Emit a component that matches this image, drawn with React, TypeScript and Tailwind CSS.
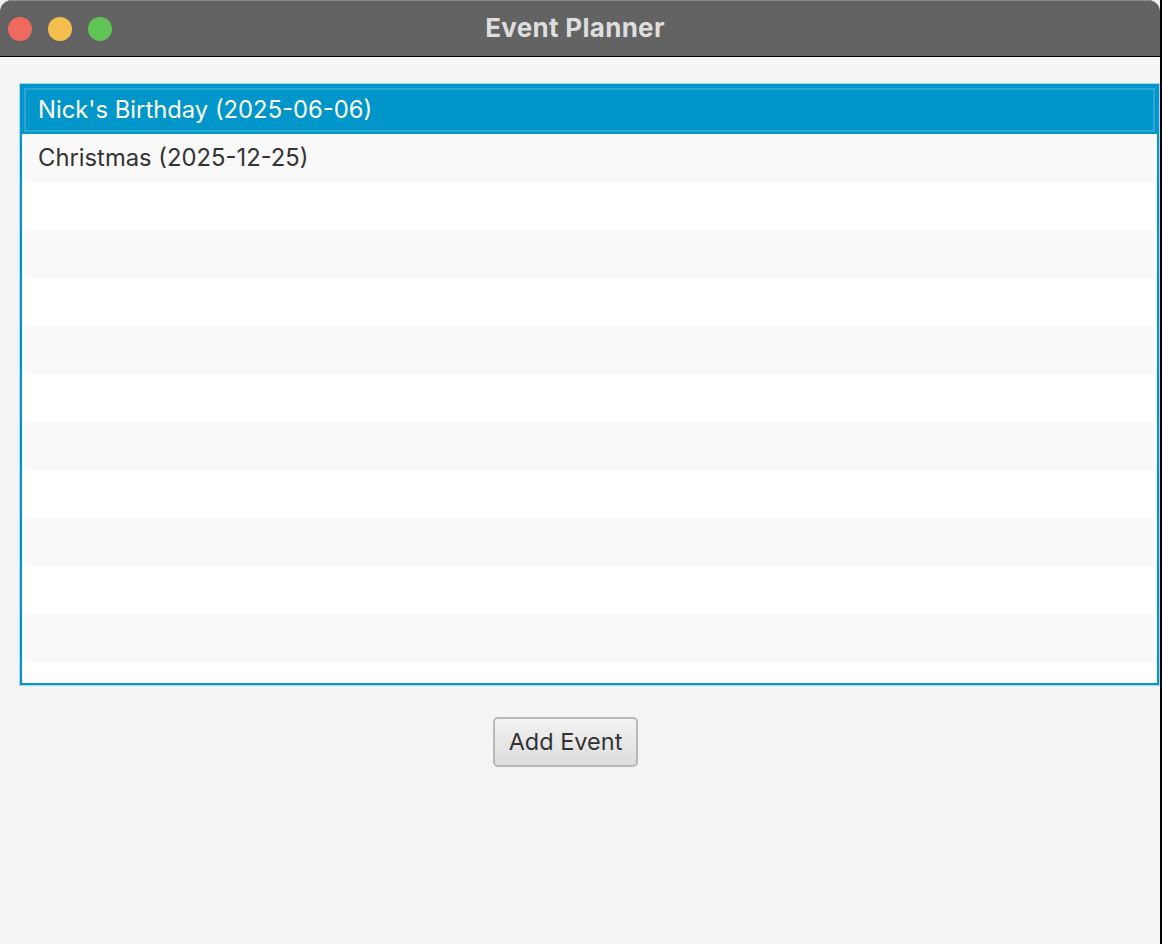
import React from "react";

const EVENTS = ["Nick's Birthday (2025-06-06)", "Christmas (2025-12-25)"];
const ROWS = 12;

export default function App() {
  const rows = Array.from({ length: ROWS }, (_, i) => EVENTS[i] ?? "");
  return (
    <div className="flex w-[1162px] h-[944px] bg-[#ececec]" style={{ fontFamily: "Inter, 'Noto Sans', sans-serif" }}>
      <div className="flex flex-col w-[1160px] h-full rounded-t-[12px] overflow-hidden bg-[#f4f4f4]">
        {/* title bar */}
        <div className="relative flex items-center h-[57px] bg-[#636363] border-t border-[#8a8a8a] border-b border-b-black shrink-0">
          <div className="flex items-center gap-[16px] pl-[8px]">
            <span className="w-[24px] h-[24px] rounded-full bg-[#ee6a5f]" />
            <span className="w-[24px] h-[24px] rounded-full bg-[#f5bf4f]" />
            <span className="w-[24px] h-[24px] rounded-full bg-[#61c555]" />
          </div>
          <div className="absolute inset-0 flex items-center justify-center pr-[10px] pb-[3px] text-[26px] font-bold text-[#dedede] tracking-[0.3px]">
            Event Planner
          </div>
        </div>

        {/* content */}
        <div className="flex flex-col flex-1 pt-[26px]">
          <div className="ml-[19px] w-[1141px] h-[603px] p-[1px] bg-[#a9d7e8]">
            <div className="w-full h-full border-2 border-[#0098cc] bg-white overflow-hidden">
              {rows.map((label, i) => {
                const selected = i === 0;
                return (
                  <div
                    key={i}
                    className={
                      selected
                        ? "relative flex items-center h-[48px] pl-[16px] bg-[#0096c9] text-white"
                        : i % 2 === 1
                        ? "flex items-center h-[48px] pl-[16px] bg-[#f9f9f9] text-[#333333]"
                        : "flex items-center h-[48px] pl-[16px] bg-white text-[#333333]"
                    }
                  >
                    {selected && <div className="absolute inset-[2px] border-2 border-[#2ba7d4]" />}
                    <span className="relative text-[23.8px] leading-none">{label}</span>
                  </div>
                );
              })}
            </div>
          </div>

          <div className="mt-[31px] ml-[493px]">
            <button className="w-[145px] h-[50px] rounded-[5px] border-2 border-[#b8b8b8] bg-gradient-to-b from-[#f2f2f2] to-[#dddddd] text-[23.5px] text-[#333333]">
              Add Event
            </button>
          </div>
        </div>
      </div>
      <div className="w-[2px] h-full bg-black" />
    </div>
  );
}
